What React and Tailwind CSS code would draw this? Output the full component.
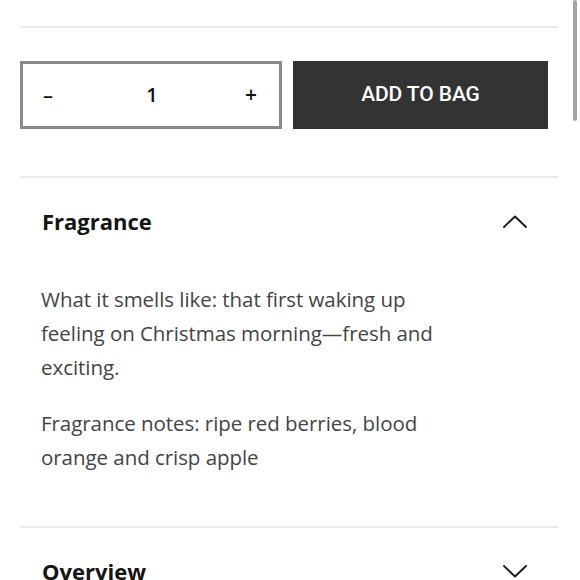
import React, { useState } from "react";

function Chevron({ up }) {
  return (
    <svg width="24" height="13" viewBox="0 0 24 13" fill="none" className="shrink-0">
      <path
        d={up ? "M1 12 L12 1.5 L23 12" : "M1 1 L12 11.5 L23 1"}
        stroke="#1a1a1a"
        strokeWidth="1.9"
        strokeLinecap="round"
        strokeLinejoin="round"
      />
    </svg>
  );
}

export default function App() {
  const [qty, setQty] = useState(1);

  return (
    <div className="relative w-[580px] h-[580px] overflow-hidden bg-white font-['Open_Sans',sans-serif]">
      {/* overlay scrollbar */}
      <div className="absolute right-[3px] top-0 w-[4px] h-[121px] rounded-full bg-[#a3a3a3]" />

      <div className="pl-[20px] pr-[22px]">
        <div className="h-[28px] border-b-2 border-[#ececec]" />

        {/* Quantity + add to bag */}
        <div className="flex gap-[11px] mt-[33px] pr-[10px]">
          <div className="w-[262px] h-[68px] border-[3px] border-[#8a8a8a] flex items-center justify-between pl-[20px] pr-[18px] text-[#111]">
            <button onClick={() => setQty(Math.max(1, qty - 1))} className="w-[20px] text-left text-[20px] font-semibold">
              –
            </button>
            <span className="text-[20px] font-semibold">{qty}</span>
            <button onClick={() => setQty(qty + 1)} className="w-[20px] text-[21px] font-semibold">
              +
            </button>
          </div>
          <button className="flex-1 h-[68px] bg-[#333333] text-white text-[21px] font-medium font-['Roboto',sans-serif] tracking-[-0.1px]">
            ADD TO BAG
          </button>
        </div>

        {/* Fragrance */}
        <div className="mt-[47px] border-t-2 border-[#ececec]">
          <div className="h-[86px] flex items-center justify-between pl-[22px] pr-[31px]">
            <h3 className="text-[22px] font-bold text-[#151515]">Fragrance</h3>
            <Chevron up />
          </div>
          <div className="pl-[21px] pt-[18px] pb-[52px] text-[20.5px] leading-[34px] text-[#444] tracking-[-0.05px]">
            <p>
              What it smells like: that first waking up
              <br />
              feeling on Christmas morning—fresh and
              <br />
              exciting.
            </p>
            <p className="mt-[22px]">
              Fragrance notes: ripe red berries, blood
              <br />
              orange and crisp apple
            </p>
          </div>
        </div>

        {/* Overview */}
        <div className="border-t-2 border-[#ececec]">
          <div className="h-[86px] flex items-center justify-between pl-[22px] pr-[31px]">
            <h3 className="text-[22px] font-bold text-[#151515]">Overview</h3>
            <Chevron />
          </div>
        </div>
      </div>
    </div>
  );
}
